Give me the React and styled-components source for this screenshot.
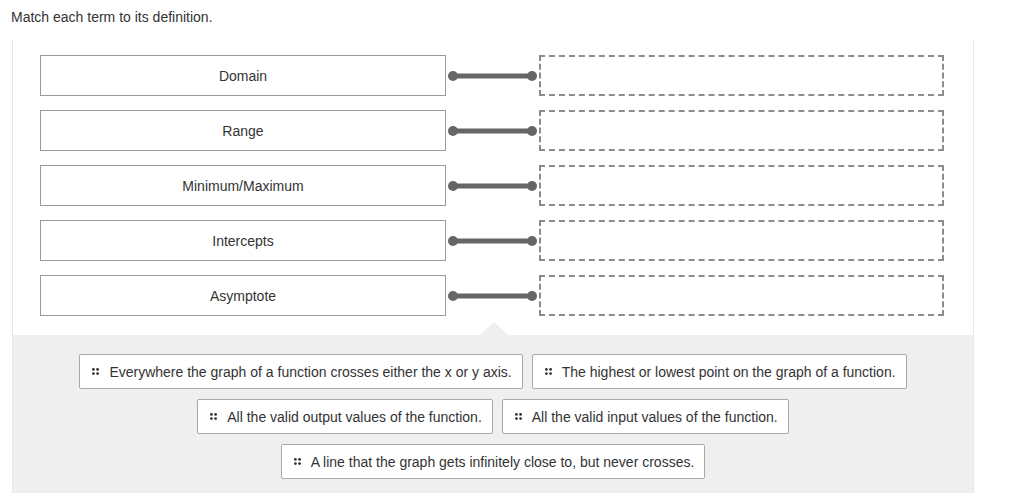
import React from "react";
import styled, { createGlobalStyle } from "styled-components";

const Global = createGlobalStyle`
  html, body { margin: 0; padding: 0; background: #fff; }
  body { font-family: "Liberation Sans", Arial, sans-serif; color: #333; }
`;

const Page = styled.div`
  width: 1036px;
  height: 494px;
  overflow: hidden;
`;

const Title = styled.div`
  padding: 9px 11px 0;
  font-size: 14px;
  line-height: 16px;
  height: 40px;
  box-sizing: border-box;
`;

const Panel = styled.div`
  margin-left: 12px;
  width: 962px;
  box-sizing: border-box;
  border-left: 1px solid #e8e8e8;
  border-right: 1px solid #e8e8e8;
  display: flex;
  flex-direction: column;
`;

const Pairs = styled.div`
  position: relative;
  padding: 15px 28px 19px 27px;
  display: flex;
  flex-direction: column;
  gap: 14px;
`;

const PairRow = styled.div`
  display: grid;
  grid-template-columns: 406px 93px 405px;
  height: 41px;
`;

const Term = styled.div`
  border: 1px solid #9a9a9a;
  box-sizing: border-box;
  display: flex;
  align-items: center;
  justify-content: center;
  font-size: 14px;
  color: #333;
  background: #fff;
`;

const Connector = styled.div`
  display: flex;
  align-items: center;
`;

const Drop = styled.div`
  border: 2px dashed #8c8c8c;
  box-sizing: border-box;
  background: #fff;
`;

const Notch = styled.div`
  position: absolute;
  left: 467px;
  bottom: 0;
  width: 0;
  height: 0;
  border-left: 14px solid transparent;
  border-right: 14px solid transparent;
  border-bottom: 13px solid #efefef;
`;

const Bank = styled.div`
  background: #efefef;
  height: 158px;
  box-sizing: border-box;
  padding: 19px 20px 14px;
  display: flex;
  flex-direction: column;
  align-items: center;
  gap: 10px;
`;

const BankRow = styled.div`
  display: flex;
  justify-content: center;
  gap: 9px;
`;

const Chip = styled.div`
  height: 35px;
  box-sizing: border-box;
  border: 1px solid #a8a8a8;
  border-radius: 2px;
  background: #fff;
  display: flex;
  align-items: center;
  gap: 10px;
  padding: 0 10px 0 12px;
  font-size: 14px;
  color: #333;
  white-space: nowrap;
`;

const Handle = () => (
  <svg width="7" height="7" viewBox="0 0 7 7">
    <g fill="#333">
      <circle cx="1.4" cy="1.4" r="1.4" />
      <circle cx="5.6" cy="1.4" r="1.4" />
      <circle cx="1.4" cy="5.6" r="1.4" />
      <circle cx="5.6" cy="5.6" r="1.4" />
    </g>
  </svg>
);

const Link = () => (
  <svg width="93" height="12" viewBox="0 0 93 12">
    <line x1="7" y1="6" x2="86" y2="6" stroke="#666" strokeWidth="5" />
    <circle cx="7" cy="6" r="5" fill="#666" />
    <circle cx="86" cy="6" r="5" fill="#666" />
  </svg>
);

const terms = ["Domain", "Range", "Minimum/Maximum", "Intercepts", "Asymptote"];

const rows = [
  [
    "Everywhere the graph of a function crosses either the x or y axis.",
    "The highest or lowest point on the graph of a function.",
  ],
  ["All the valid output values of the function.", "All the valid input values of the function."],
  ["A line that the graph gets infinitely close to, but never crosses."],
];

export default function App() {
  return (
    <Page>
      <Global />
      <Title>Match each term to its definition.</Title>
      <Panel>
        <Pairs>
          {terms.map((t) => (
            <PairRow key={t}>
              <Term>{t}</Term>
              <Connector>
                <Link />
              </Connector>
              <Drop />
            </PairRow>
          ))}
          <Notch />
        </Pairs>
        <Bank>
          {rows.map((r, i) => (
            <BankRow key={i}>
              {r.map((c) => (
                <Chip key={c}>
                  <Handle />
                  {c}
                </Chip>
              ))}
            </BankRow>
          ))}
        </Bank>
      </Panel>
    </Page>
  );
}
